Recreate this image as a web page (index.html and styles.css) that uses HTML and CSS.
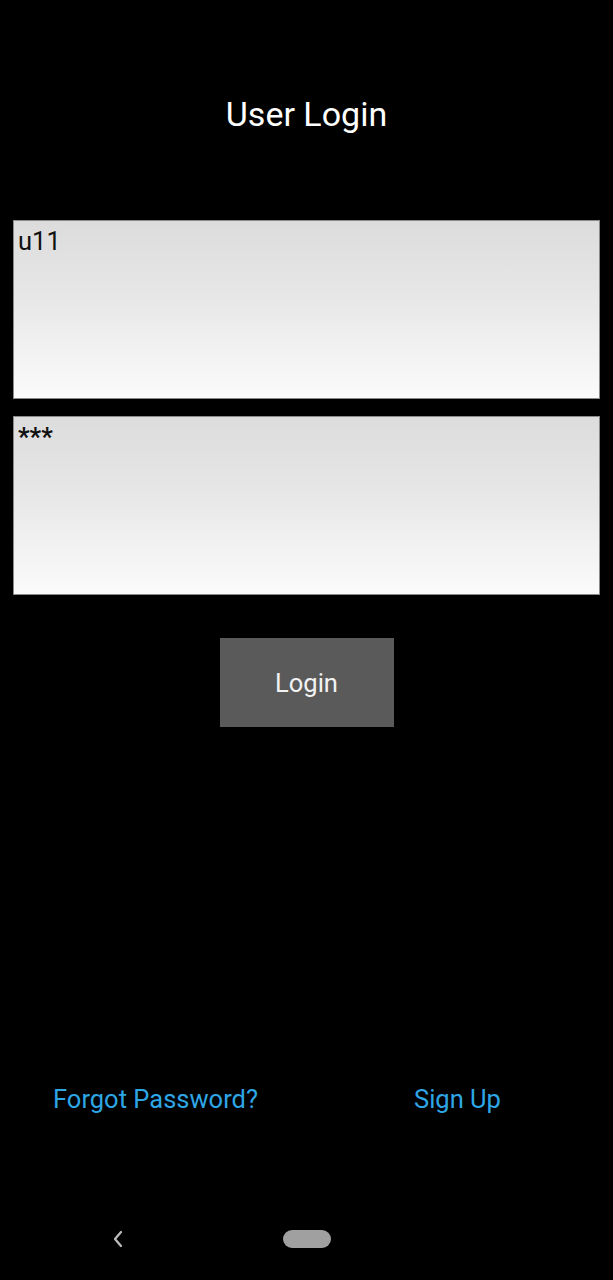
FILE: index.html
```html
<!DOCTYPE html>
<html>
<head>
<meta charset="utf-8">
<link rel="stylesheet" href="styles.css">
</head>
<body>
<div class="screen">
  <h1 class="title">User Login</h1>
  <div class="field"><span class="field-text">u11</span></div>
  <div class="field field-pass"><span class="field-text">***</span></div>
  <div class="btn-row"><div class="btn">Login</div></div>
  <div class="spacer"></div>
  <div class="links">
    <span class="link link-forgot">Forgot Password?</span>
    <span class="link link-signup">Sign Up</span>
  </div>
  <div class="navbar">
    <svg class="nav-back" width="14" height="20" viewBox="0 0 14 20"><path d="M10 3 L4 10 L10 17" fill="none" stroke="#bdbdbd" stroke-width="2.2" stroke-linecap="round" stroke-linejoin="round"/></svg>
    <div class="nav-home"></div>
  </div>
</div>
</body>
</html>
```

FILE: styles.css
```css
html, body {
  margin: 0;
  padding: 0;
  background: #000;
}
.screen {
  width: 613px;
  height: 1280px;
  display: flex;
  flex-direction: column;
  font-family: Roboto, "Noto Sans", sans-serif;
}
.title {
  margin: 0;
  padding-top: 94px;
  text-align: center;
  font-weight: 400;
  font-size: 34px;
  line-height: 40px;
  color: #fff;
}
.field {
  flex: none;
  margin-left: 13px;
  width: 587px;
  height: 179px;
  box-sizing: border-box;
  border: 1px solid #8a8a8a;
  background: linear-gradient(to bottom, #dcdcdc 0%, #e6e6e6 40%, #fbfbfb 100%);
  padding: 6px 0 0 4px;
  margin-top: 86px;
}
.field-pass {
  margin-top: 17px;
}
.field-text {
  font-family: Roboto, sans-serif;
  font-size: 25.5px;
  line-height: 28px;
  color: #111;
}
.field-pass .field-text {
  font-weight: 700;
}
.btn-row {
  display: flex;
  justify-content: center;
  margin-top: 43px;
}
.btn {
  width: 174px;
  height: 89px;
  background: #5a5a5a;
  color: #f2f2f2;
  font-size: 25.5px;
  display: flex;
  align-items: center;
  justify-content: center;
}
.spacer {
  flex: 1;
}
.links {
  display: flex;
  align-items: center;
  height: 40px;
  margin-bottom: 79px;
  padding-left: 53px;
  color: #2ea6e6;
  font-size: 25.5px;
}
.link-signup {
  margin-left: 156px;
}
.navbar {
  height: 82px;
  display: flex;
  align-items: center;
}
.nav-back {
  margin-left: 111px;
}
.nav-home {
  margin-left: 158px;
  width: 48px;
  height: 18px;
  border-radius: 9px;
  background: #a0a0a0;
}
```
